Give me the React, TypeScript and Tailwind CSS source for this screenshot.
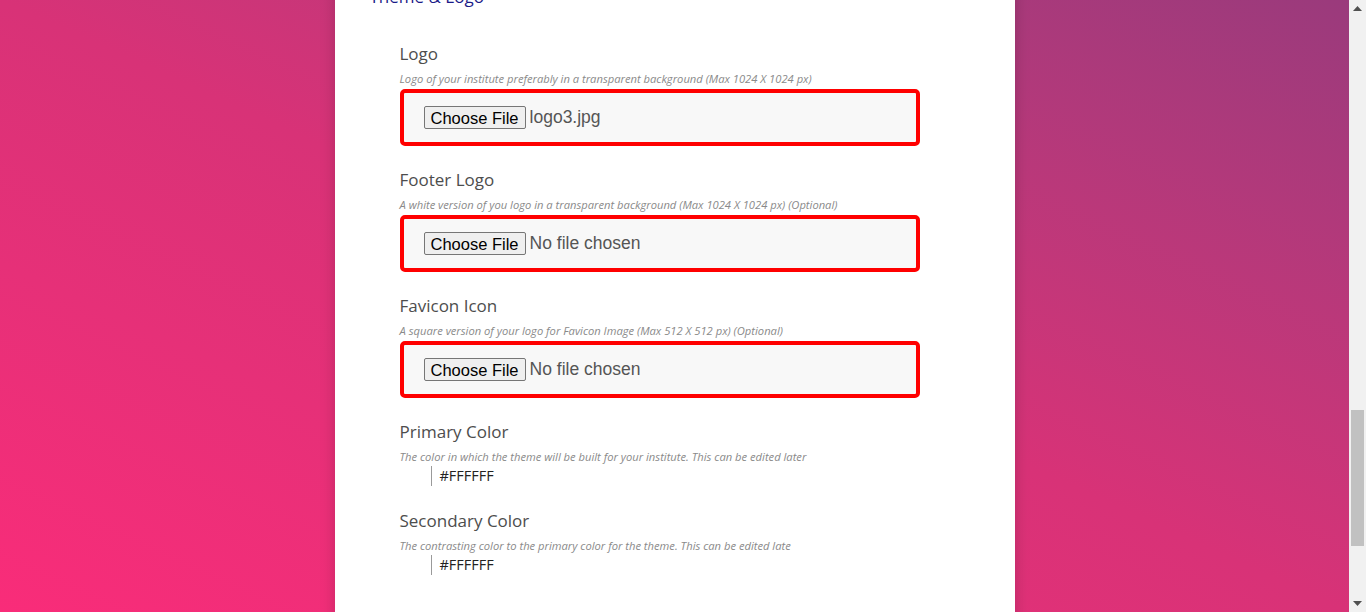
import React, { useLayoutEffect, useRef } from "react";

interface UploadField {
  label: string;
  hint: string;
  fileName?: string;
}

interface ColorField {
  label: string;
  hint: string;
  value: string;
}

const uploads: UploadField[] = [
  {
    label: "Logo",
    hint: "Logo of your institute preferably in a transparent background (Max 1024 X 1024 px)",
    fileName: "logo3.jpg",
  },
  {
    label: "Footer Logo",
    hint: "A white version of you logo in a transparent background (Max 1024 X 1024 px) (Optional)",
  },
  {
    label: "Favicon Icon",
    hint: "A square version of your logo for Favicon Image (Max 512 X 512 px) (Optional)",
  },
];

const colors: ColorField[] = [
  {
    label: "Primary Color",
    hint: "The color in which the theme will be built for your institute. This can be edited later",
    value: "#FFFFFF",
  },
  {
    label: "Secondary Color",
    hint: "The contrasting color to the primary color for the theme. This can be edited late",
    value: "#FFFFFF",
  },
];

const FieldLabel: React.FC<{ label: string; hint: string }> = ({ label, hint }) => (
  <>
    <label className="block text-[17px] leading-[26px] text-[#4d4d4d]">{label}</label>
    <p className="mt-[5px] whitespace-nowrap text-[11.2px] leading-[14px] italic text-[#8a8a8a]">
      {hint}
    </p>
  </>
);

const Arrow: React.FC<{ down?: boolean }> = ({ down }) => (
  <div className="flex h-[17px] items-center justify-center">
    <svg width="9" height="5" viewBox="0 0 9 5">
      <polygon points={down ? "0,0 9,0 4.5,5" : "0,5 9,5 4.5,0"} fill="#505050" />
    </svg>
  </div>
);

const App: React.FC = () => {
  const scrollRef = useRef<HTMLDivElement>(null);
  const anchorRef = useRef<HTMLDivElement>(null);

  // page is shown scrolled down to the theme section
  useLayoutEffect(() => {
    if (scrollRef.current && anchorRef.current) {
      scrollRef.current.scrollTop = anchorRef.current.offsetTop - 41;
    }
  }, []);

  return (
    <div className="flex h-[612px] w-full">
      <div
        ref={scrollRef}
        className="relative flex-1 overflow-hidden bg-linear-to-tr from-[#f92c79] via-[#d83277] to-[#9a3a7c] font-['Open_Sans',sans-serif]"
      >
        <div className="mx-auto w-[680px] bg-white shadow-[0_0_14px_rgba(0,0,0,0.18)]">
          {/* earlier sections of the form sit above the fold */}
          <div className="h-[1740px]" />

          <h2 className="pl-[35px] text-[17px] leading-[24px] font-medium text-[#1a1a88]">
            Theme &amp; Logo
          </h2>

          <div className="mt-[32px] px-[65px] pb-[245px]">
            <div ref={anchorRef} />
            {uploads.map((field) => (
              <div key={field.label} className="mb-[21px]">
                <FieldLabel label={field.label} hint={field.hint} />
                <div className="mt-[3px] flex h-[57px] w-[520px] items-center rounded-[5px] border-4 border-[#ff0000] bg-[#f8f8f8] pl-[20px] font-['Liberation_Sans',Arial,sans-serif]">
                  <button
                    type="button"
                    className="h-[23px] rounded-[2px] border border-[#767676] bg-[#efefef] px-[6px] text-[16.5px] leading-[20px] text-black"
                  >
                    Choose File
                  </button>
                  <span className="ml-[4px] text-[17.5px] text-[#555]">
                    {field.fileName ?? "No file chosen"}
                  </span>
                </div>
              </div>
            ))}

            {colors.map((field) => (
              <div key={field.label} className="mb-[20px]">
                <FieldLabel label={field.label} hint={field.hint} />
                <div className="ml-[31px] flex h-[24px] items-center">
                  <div className="h-[20px] w-[1px] bg-[#9a9a9a]" />
                  <span className="ml-[8px] text-[14.5px] text-[#222]">{field.value}</span>
                </div>
              </div>
            ))}
          </div>
        </div>
      </div>

      {/* window scrollbar */}
      <div className="flex w-[17px] flex-col bg-[#f1f1f1]">
        <Arrow />
        <div className="flex-1 pt-[393px]">
          <div className="mx-[2px] h-[136px] bg-[#c1c1c1]" />
        </div>
        <Arrow down />
      </div>
    </div>
  );
};

export default App;
